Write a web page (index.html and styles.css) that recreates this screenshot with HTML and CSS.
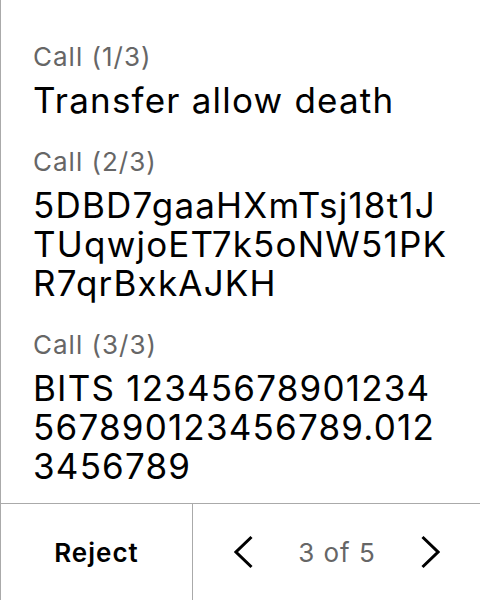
FILE: index.html
```html
<!DOCTYPE html>
<html lang="en">
<head>
<meta charset="utf-8">
<title>Calls</title>
<link rel="stylesheet" href="styles.css">
</head>
<body>
<div class="screen">
  <main class="content">
    <section class="call">
      <div class="label">Call (1/3)</div>
      <div class="value">Transfer allow death</div>
    </section>
    <section class="call">
      <div class="label">Call (2/3)</div>
      <div class="value"><span class="line">5DBD7gaaHXmTsj18t1J</span><span class="line">TUqwjoET7k5oNW51PK</span><span class="line">R7qrBxkAJKH</span></div>
    </section>
    <section class="call">
      <div class="label">Call (3/3)</div>
      <div class="value"><span class="line">BITS 12345678901234</span><span class="line">567890123456789.012</span><span class="line">3456789</span></div>
    </section>
  </main>
  <footer class="footer">
    <div class="reject">Reject</div>
    <div class="pager">
      <svg class="chev" width="20" height="34" viewBox="0 0 20 34"><polyline points="17.5,2 2,17 17.5,32" fill="none" stroke="#000" stroke-width="3"/></svg>
      <span class="count">3 of 5</span>
      <svg class="chev" width="20" height="34" viewBox="0 0 20 34"><polyline points="2.5,2 18,17 2.5,32" fill="none" stroke="#000" stroke-width="3"/></svg>
    </div>
  </footer>
</div>
</body>
</html>
```
FILE: styles.css
```css
html, body {
  margin: 0;
  padding: 0;
  background: #fff;
}

.screen {
  width: 480px;
  height: 600px;
  box-sizing: border-box;
  border-left: 1px solid #aaaaaa;
  display: flex;
  flex-direction: column;
  font-family: Inter, "Noto Sans", sans-serif;
  color: #000;
}

.content {
  flex: 1;
  padding: 42px 0 0 32px;
  display: flex;
  flex-direction: column;
  gap: 27px;
}

.call {
  display: flex;
  flex-direction: column;
  gap: 9px;
}

.label {
  font-size: 26px;
  line-height: 30px;
  letter-spacing: 1px;
  color: #666666;
}

.value {
  font-size: 35px;
  line-height: 39px;
  letter-spacing: 1.2px;
  color: #000;
}

.line {
  display: block;
}

.footer {
  height: 96px;
  flex: none;
  border-top: 1px solid #aaaaaa;
  display: flex;
}

.reject {
  width: 191px;
  border-right: 1px solid #aaaaaa;
  display: flex;
  align-items: center;
  justify-content: center;
  font-size: 26px;
  font-weight: 600;
  letter-spacing: 1px;
  color: #000;
}

.pager {
  flex: 1;
  display: flex;
  align-items: center;
  justify-content: space-between;
  padding: 0 40px 0 41px;
}

.count {
  font-size: 26px;
  letter-spacing: 1px;
  color: #666666;
}

.chev {
  display: block;
}
```
